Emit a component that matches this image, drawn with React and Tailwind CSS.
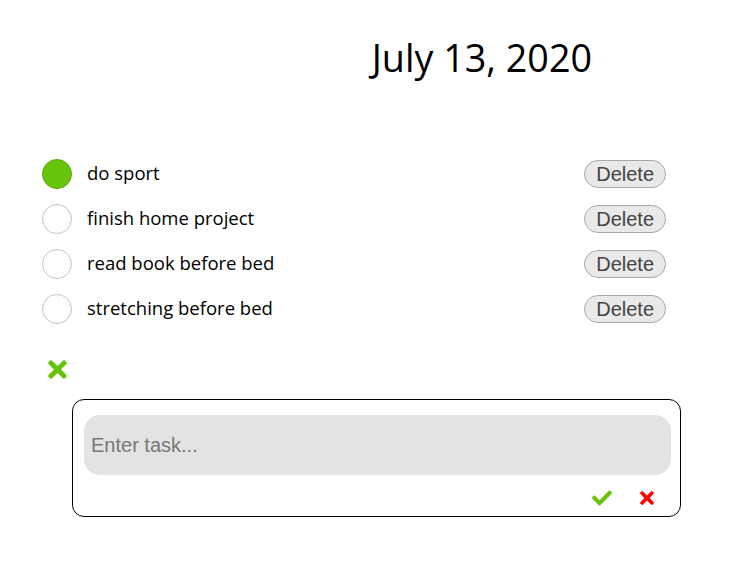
import React, { useState } from 'react';
import { FaCheck, FaTimes } from 'react-icons/fa';

const initialTasks = [
  { id: 1, text: 'do sport', done: true },
  { id: 2, text: 'finish home project', done: false },
  { id: 3, text: 'read book before bed', done: false },
  { id: 4, text: 'stretching before bed', done: false },
];

const TaskRow = ({ task, onToggle, onDelete }) => (
  <li className="h-[45px] flex items-center">
    <button
      type="button"
      onClick={() => onToggle(task.id)}
      className={`w-[30px] h-[30px] rounded-full border shrink-0 ${task.done ? 'bg-[#66c40a] border-[#5aa80c]' : 'bg-white border-[#c4c4c4]'}`}
    />
    <span className="ml-[15px] text-[18.5px] leading-[24px] pb-[2px] text-black font-['Segoe_UI','Open_Sans',sans-serif] flex-1">{task.text}</span>
    <button
      type="button"
      onClick={() => onDelete(task.id)}
      className="h-[28px] px-[11px] rounded-full bg-[#e9e9e9] border border-[#a8a8a8] text-[20px] leading-none text-[#444] font-['Liberation_Sans',Arial,sans-serif]"
    >
      Delete
    </button>
  </li>
);

export default function App() {
  const [tasks, setTasks] = useState(initialTasks);
  const [value, setValue] = useState('');

  const toggle = (id) => setTasks(prev => prev.map(t => t.id === id ? { ...t, done: !t.done } : t));
  const remove = (id) => setTasks(prev => prev.filter(t => t.id !== id));

  return (
    <div className="w-[730px] h-[583px] bg-white pt-[35px]">
      {/* Date */}
      <div className="flex justify-end pr-[138px]">
        <h1 className="text-[37.7px] leading-[46px] text-black font-['Segoe_UI','Open_Sans',sans-serif]">July 13, 2020</h1>
      </div>

      {/* Tasks */}
      <ul className="mt-[70px] pl-[42px] pr-[64px]">
        {tasks.map(t => <TaskRow key={t.id} task={t} onToggle={toggle} onDelete={remove} />)}
      </ul>

      <div className="pl-[44px] mt-[23px] h-[30px] flex items-center">
        <FaTimes className="text-[#66c40a]" size={27} />
      </div>

      {/* New task form */}
      <div className="ml-[72px] mt-[15px] w-[609px] h-[118px] border border-black rounded-[12px] pl-[11px] pt-[15px]">
        <input
          value={value}
          onChange={e => setValue(e.target.value)}
          placeholder="Enter task..."
          className="w-[587px] h-[60px] rounded-[16px] bg-[#e3e3e3] px-[7px] text-[20px] text-[#333] placeholder:text-[#777] outline-none font-['Liberation_Sans',Arial,sans-serif]"
        />
        <div className="flex justify-end items-center gap-[25px] pr-[23px] mt-[13px] h-[20px]">
          <FaCheck className="text-[#66c40a]" size={20} />
          <FaTimes className="text-[#ff0000]" size={20} />
        </div>
      </div>
    </div>
  );
}
